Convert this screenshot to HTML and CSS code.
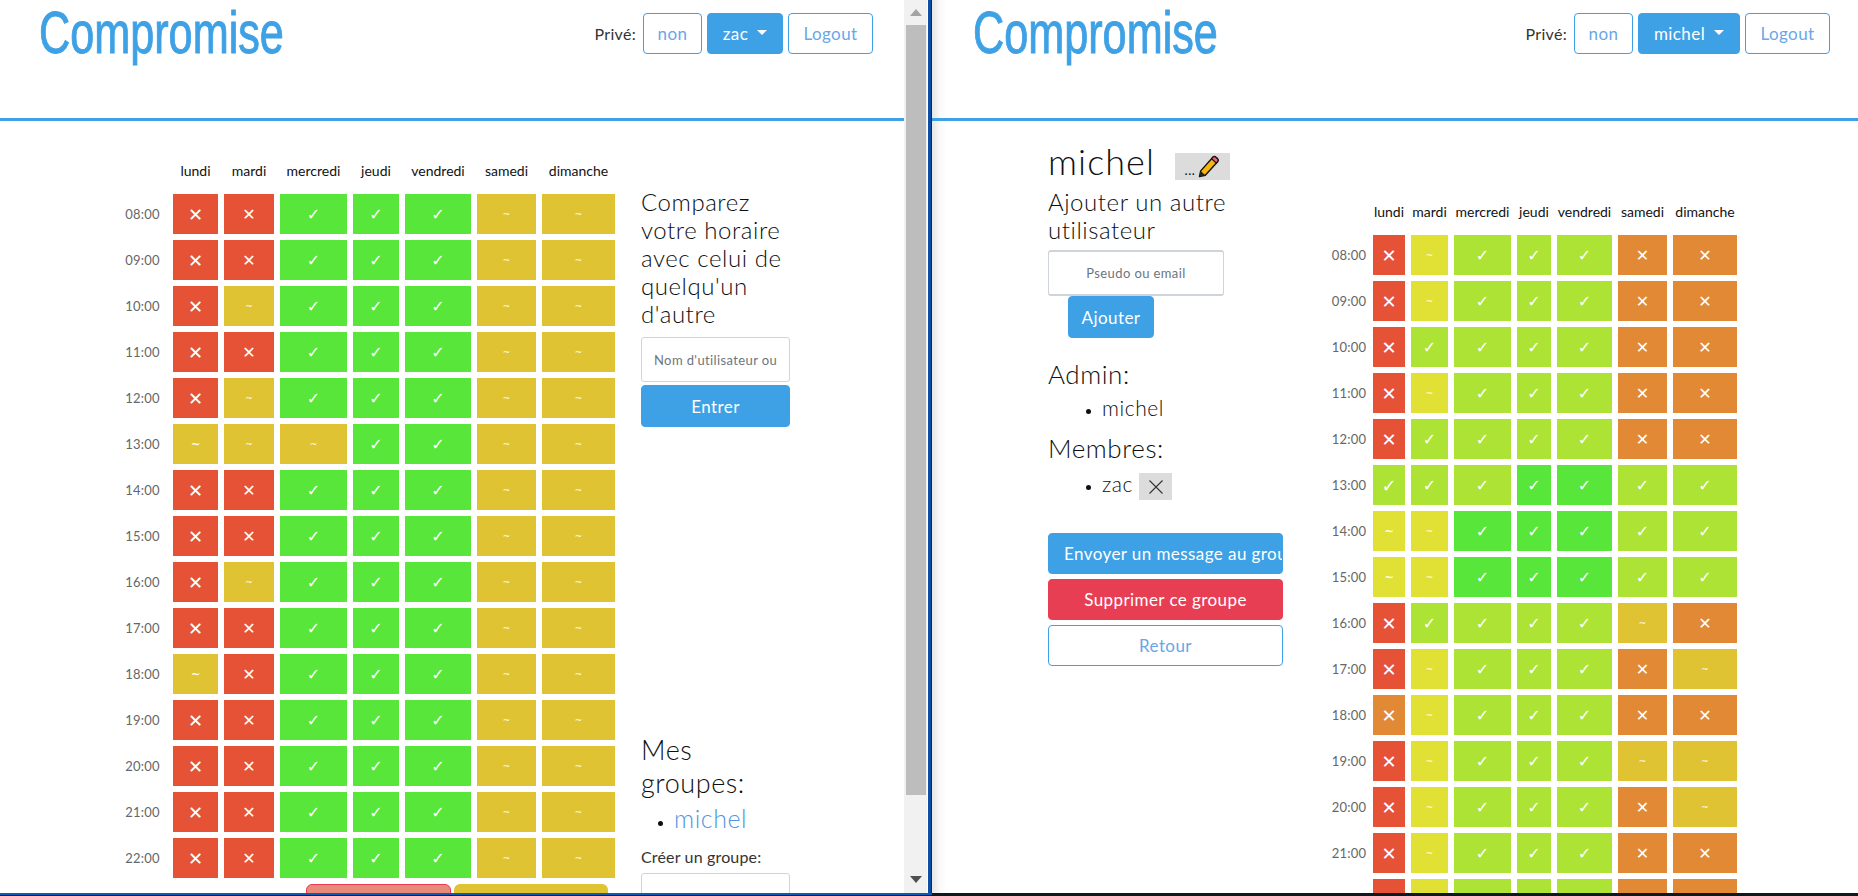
FILE: index.html
```html
<!DOCTYPE html>
<html lang="fr">
<head>
<meta charset="utf-8">
<title>Compromise</title>
<link rel="stylesheet" href="styles.css">
</head>
<body>
<div class="desktop">
  <div class="windows">
    <section class="pane pane-left">
      <div class="page">
        <header class="topbar">
          <h1 class="logo">Compromise</h1>
          <div class="controls">
            <span class="prive">Privé:</span>
            <a class="btn outline btn-non">non</a>
            <a class="btn primary btn-user btn-zac">zac<i class="caret"></i></a>
            <a class="btn outline btn-logout">Logout</a>
          </div>
        </header>
        <main class="main main-left">
          <div class="sched sched-left">
            <span></span><b>lundi</b><b>mardi</b><b>mercredi</b><b>jeudi</b><b>vendredi</b><b>samedi</b><b>dimanche</b>
            <em>08:00</em><i class="c red first">✕</i><i class="c red">✕</i><i class="c green">✓</i><i class="c green">✓</i><i class="c green">✓</i><i class="c gold t">~</i><i class="c gold t">~</i>
            <em>09:00</em><i class="c red first">✕</i><i class="c red">✕</i><i class="c green">✓</i><i class="c green">✓</i><i class="c green">✓</i><i class="c gold t">~</i><i class="c gold t">~</i>
            <em>10:00</em><i class="c red first">✕</i><i class="c gold t">~</i><i class="c green">✓</i><i class="c green">✓</i><i class="c green">✓</i><i class="c gold t">~</i><i class="c gold t">~</i>
            <em>11:00</em><i class="c red first">✕</i><i class="c red">✕</i><i class="c green">✓</i><i class="c green">✓</i><i class="c green">✓</i><i class="c gold t">~</i><i class="c gold t">~</i>
            <em>12:00</em><i class="c red first">✕</i><i class="c gold t">~</i><i class="c green">✓</i><i class="c green">✓</i><i class="c green">✓</i><i class="c gold t">~</i><i class="c gold t">~</i>
            <em>13:00</em><i class="c gold t first">~</i><i class="c gold t">~</i><i class="c gold t">~</i><i class="c green">✓</i><i class="c green">✓</i><i class="c gold t">~</i><i class="c gold t">~</i>
            <em>14:00</em><i class="c red first">✕</i><i class="c red">✕</i><i class="c green">✓</i><i class="c green">✓</i><i class="c green">✓</i><i class="c gold t">~</i><i class="c gold t">~</i>
            <em>15:00</em><i class="c red first">✕</i><i class="c red">✕</i><i class="c green">✓</i><i class="c green">✓</i><i class="c green">✓</i><i class="c gold t">~</i><i class="c gold t">~</i>
            <em>16:00</em><i class="c red first">✕</i><i class="c gold t">~</i><i class="c green">✓</i><i class="c green">✓</i><i class="c green">✓</i><i class="c gold t">~</i><i class="c gold t">~</i>
            <em>17:00</em><i class="c red first">✕</i><i class="c red">✕</i><i class="c green">✓</i><i class="c green">✓</i><i class="c green">✓</i><i class="c gold t">~</i><i class="c gold t">~</i>
            <em>18:00</em><i class="c gold t first">~</i><i class="c red">✕</i><i class="c green">✓</i><i class="c green">✓</i><i class="c green">✓</i><i class="c gold t">~</i><i class="c gold t">~</i>
            <em>19:00</em><i class="c red first">✕</i><i class="c red">✕</i><i class="c green">✓</i><i class="c green">✓</i><i class="c green">✓</i><i class="c gold t">~</i><i class="c gold t">~</i>
            <em>20:00</em><i class="c red first">✕</i><i class="c red">✕</i><i class="c green">✓</i><i class="c green">✓</i><i class="c green">✓</i><i class="c gold t">~</i><i class="c gold t">~</i>
            <em>21:00</em><i class="c red first">✕</i><i class="c red">✕</i><i class="c green">✓</i><i class="c green">✓</i><i class="c green">✓</i><i class="c gold t">~</i><i class="c gold t">~</i>
            <em>22:00</em><i class="c red first">✕</i><i class="c red">✕</i><i class="c green">✓</i><i class="c green">✓</i><i class="c green">✓</i><i class="c gold t">~</i><i class="c gold t">~</i>
          </div>
          <aside class="side">
            <h4 class="side-title">Comparez votre horaire avec celui de quelqu'un d'autre</h4>
            <input class="field field-compare" placeholder="Nom d'utilisateur ou email">
            <a class="btn primary btn-enter">Entrer</a>
            <h3 class="groups-title">Mes groupes:</h3>
            <ul class="groups"><li><a>michel</a></li></ul>
            <label class="create">Créer un groupe:</label>
            <input class="field field-create">
          </aside>
          <div class="actions">
            <a class="btn-clear"></a>
            <a class="btn-maybe"></a>
          </div>
        </main>
      </div>
      <div class="scrollbar">
        <span class="arrow up"></span>
        <span class="thumb"></span>
        <span class="arrow down"></span>
      </div>
    </section>
    <div class="divider"></div>
    <section class="pane pane-right">
      <div class="page">
        <header class="topbar topbar-right">
          <h1 class="logo">Compromise</h1>
          <div class="controls">
            <span class="prive">Privé:</span>
            <a class="btn outline btn-non">non</a>
            <a class="btn primary btn-user btn-michel">michel<i class="caret"></i></a>
            <a class="btn outline btn-logout">Logout</a>
          </div>
        </header>
        <main class="main main-right">
          <div class="group">
            <div class="group-head">
              <h2 class="group-name">michel</h2>
              <span class="edit">...<svg class="pencil" viewBox="0 0 24 24" width="24" height="24"><path d="M3.5 21.5l1.2-5.6L16.9 2.2c.9-.9 2.2-.8 3 0l1.7 1.6c.8.8.8 2 0 2.9L9.3 20.2z" fill="#f8b50d" stroke="#111" stroke-width="1.4" stroke-linejoin="round"/><path d="M16.9 2.2c.9-.9 2.2-.8 3 0l1.7 1.6c.8.8.8 2 0 2.9l-1.3 1.4-4.7-4.4z" fill="#ee5f73" stroke="#111" stroke-width="1.2"/><path d="M3.5 21.5l1.2-5.6 4.6 4.3z" fill="#222"/></svg></span>
            </div>
            <h4 class="add-title">Ajouter un autre utilisateur</h4>
            <input class="field field-add" placeholder="Pseudo ou email">
            <a class="btn primary btn-add">Ajouter</a>
            <h4 class="role role-admin">Admin:</h4>
            <ul class="people people-admin"><li>michel</li></ul>
            <h4 class="role role-members">Membres:</h4>
            <ul class="people"><li class="member">zac <span class="remove"><svg viewBox="0 0 16 16" width="16" height="16"><path d="M1.5 1.5l13 13M14.5 1.5l-13 13" stroke="#333" stroke-width="1.1" fill="none"/></svg></span></li></ul>
            <a class="btn primary wide wide-first"><span>Envoyer un message au groupe</span></a>
            <a class="btn danger wide">Supprimer ce groupe</a>
            <a class="btn outline wide">Retour</a>
          </div>
          <div class="sched sched-right">
            <span></span><b>lundi</b><b>mardi</b><b>mercredi</b><b>jeudi</b><b>vendredi</b><b>samedi</b><b>dimanche</b>
            <em>08:00</em><i class="c red first">✕</i><i class="c lemon t">~</i><i class="c lime">✓</i><i class="c lime">✓</i><i class="c lime">✓</i><i class="c orange">✕</i><i class="c orange">✕</i>
            <em>09:00</em><i class="c red first">✕</i><i class="c lemon t">~</i><i class="c lime">✓</i><i class="c lime">✓</i><i class="c lime">✓</i><i class="c orange">✕</i><i class="c orange">✕</i>
            <em>10:00</em><i class="c red first">✕</i><i class="c lime">✓</i><i class="c lime">✓</i><i class="c lime">✓</i><i class="c lime">✓</i><i class="c orange">✕</i><i class="c orange">✕</i>
            <em>11:00</em><i class="c red first">✕</i><i class="c lemon t">~</i><i class="c lime">✓</i><i class="c lime">✓</i><i class="c lime">✓</i><i class="c orange">✕</i><i class="c orange">✕</i>
            <em>12:00</em><i class="c red first">✕</i><i class="c lime">✓</i><i class="c lime">✓</i><i class="c lime">✓</i><i class="c lime">✓</i><i class="c orange">✕</i><i class="c orange">✕</i>
            <em>13:00</em><i class="c lime first">✓</i><i class="c lime">✓</i><i class="c lime">✓</i><i class="c green">✓</i><i class="c green">✓</i><i class="c lime">✓</i><i class="c lime">✓</i>
            <em>14:00</em><i class="c lemon t first">~</i><i class="c lemon t">~</i><i class="c green">✓</i><i class="c green">✓</i><i class="c green">✓</i><i class="c lime">✓</i><i class="c lime">✓</i>
            <em>15:00</em><i class="c lemon t first">~</i><i class="c lemon t">~</i><i class="c green">✓</i><i class="c green">✓</i><i class="c green">✓</i><i class="c lime">✓</i><i class="c lime">✓</i>
            <em>16:00</em><i class="c red first">✕</i><i class="c lime">✓</i><i class="c lime">✓</i><i class="c lime">✓</i><i class="c lime">✓</i><i class="c gold t">~</i><i class="c orange">✕</i>
            <em>17:00</em><i class="c red first">✕</i><i class="c lemon t">~</i><i class="c lime">✓</i><i class="c lime">✓</i><i class="c lime">✓</i><i class="c orange">✕</i><i class="c gold t">~</i>
            <em>18:00</em><i class="c orange first">✕</i><i class="c lemon t">~</i><i class="c lime">✓</i><i class="c lime">✓</i><i class="c lime">✓</i><i class="c orange">✕</i><i class="c orange">✕</i>
            <em>19:00</em><i class="c red first">✕</i><i class="c lemon t">~</i><i class="c lime">✓</i><i class="c lime">✓</i><i class="c lime">✓</i><i class="c gold t">~</i><i class="c gold t">~</i>
            <em>20:00</em><i class="c red first">✕</i><i class="c lemon t">~</i><i class="c lime">✓</i><i class="c lime">✓</i><i class="c lime">✓</i><i class="c orange">✕</i><i class="c gold t">~</i>
            <em>21:00</em><i class="c red first">✕</i><i class="c lemon t">~</i><i class="c lime">✓</i><i class="c lime">✓</i><i class="c lime">✓</i><i class="c orange">✕</i><i class="c orange">✕</i>
            <em>22:00</em><i class="c red first">✕</i><i class="c lemon t">~</i><i class="c lime">✓</i><i class="c lime">✓</i><i class="c lime">✓</i><i class="c orange">✕</i><i class="c orange">✕</i>
          </div>
        </main>
      </div>
    </section>
  </div>
  <div class="taskbar"></div>
</div>
</body>
</html>
```
FILE: styles.css
```css
* { box-sizing: border-box; }
html, body { margin: 0; height: 100%; overflow: hidden; background: #fff; }
body { font-family: "Lato", "Open Sans", sans-serif; color: #0d0f12; letter-spacing: .035em; font-weight: 300; }
h1, h2, h3, h4, ul { margin: 0; padding: 0; font-weight: 300; }

.desktop { display: flex; flex-direction: column; height: 896px; }
.windows { display: flex; height: 893px; overflow: hidden; }
.taskbar { height: 3px; background: linear-gradient(90deg, #0d5cb0 0 932px, #10181f 932px); border-bottom: 1px solid #10181f; }

.pane { display: flex; height: 893px; overflow: hidden; background: #fff; }
.pane-left { width: 928px; }
.pane-right { width: 926px; background: linear-gradient(90deg, #e6e6e6, #fafafa 8px, #fff 15px); }
.divider { width: 4px; background: linear-gradient(90deg, #0b4fa6 0 60%, #0a1a38); }
.page { flex: 1; min-width: 0; }

.topbar { display: flex; justify-content: space-between; height: 121px; padding: 0 31px 0 39px; border-bottom: 3px solid #3ea1e6; }
.topbar-right { padding: 0 28px 0 41px; }
.logo { width: 200px; font-family: "Liberation Sans", sans-serif; font-size: 60px; line-height: 66px; color: #3ea1e6; letter-spacing: 0; transform: scaleX(.72); transform-origin: 0 0; font-weight: 400; white-space: nowrap; -webkit-text-stroke: 1px #3ea1e6; }
.controls { display: flex; align-items: center; gap: 5px; height: 41px; margin-top: 13px; }
.prive { font-size: 16px; margin-right: 2px; color: #333; letter-spacing: .02em; font-weight: 400; }

.btn { display: flex; align-items: center; justify-content: center; height: 41px; border-radius: 4px; font-size: 17px; border: 1px solid #3ea1e6; white-space: nowrap; letter-spacing: .025em; font-weight: 400; }
.outline { background: #fff; color: #6aa6e8; }
.primary { background: #3ea1e6; color: #fff; }
.danger { background: #e83e54; border-color: #e83e54; color: #fff; }
.btn-non { width: 59px; }
.btn-logout { width: 85px; }
.btn-zac { width: 76px; }
.btn-michel { width: 102px; }
.caret { width: 0; height: 0; margin-left: 9px; margin-bottom: 3px; border: 5px solid transparent; border-top-color: #fff; border-bottom: 0; }

.main { display: flex; position: relative; }
.main-left { padding: 40px 0 0 118px; gap: 26px; }
.main-right { padding: 19px 0 0 116px; gap: 48px; }

.sched { display: grid; grid-auto-rows: 40px; row-gap: 6px; column-gap: 6px; align-self: flex-start; }
.sched-left { grid-template-columns: 49px 45px 50px 67px 46px 66px 59px 73px; grid-template-rows: 27px; }
.sched-right { grid-template-columns: 36px 32px 37px 57px 34px 55px 49px 64px; grid-template-rows: 27px; margin-top: 62px; }
.sched b { font-weight: 400; font-size: 14px; line-height: 20px; text-align: center; white-space: nowrap; color: #111; letter-spacing: 0; display: flex; justify-content: center; }
.sched em { font-style: normal; font-weight: 400; font-size: 13px; line-height: 40px; text-align: center; color: #666; letter-spacing: .02em; }
.c { font-family: "DejaVu Sans", sans-serif; font-style: normal; font-weight: 400; display: flex; align-items: center; justify-content: center; color: #fff; font-size: 16px; letter-spacing: 0; }
.c.t { font-size: 9px; }
.first { font-size: 18px; font-weight: 700; }
.c.t.first { font-size: 11px; }
.red { background: #e55235; }
.green { background: #57e639; }
.gold { background: #e0c332; }
.lime { background: #ade335; }
.lemon { background: #e1e135; }
.orange { background: #e28936; }

.side { width: 149px; padding-top: 27px; flex: none; }
.side-title { font-size: 24px; line-height: 28px; margin-bottom: 9px; }
.field { display: block; width: 100%; height: 45px; padding: 0 12px; border: 1px solid #ced4da; border-radius: 3px; background: #fff; font-family: inherit; font-size: 13px; letter-spacing: .03em; font-weight: 400; }
.field::placeholder { color: #6c757d; opacity: 1; }
.btn-enter { height: 42px; margin-top: 3px; }
.groups-title { font-size: 27px; line-height: 33px; margin-top: 306px; }
.groups { margin: 3px 0 0; padding-left: 33px; font-size: 25px; line-height: 32px; }
.groups li::marker { font-size: 14px; }
.groups a { color: #4f96e4; }
.create { display: block; font-size: 16px; line-height: 20px; margin-top: 13px; letter-spacing: .01em; font-weight: 400; color: #333; }
.field-create { margin-top: 6px; height: 60px; }

.actions { position: absolute; left: 306px; top: 763px; display: flex; gap: 3px; }
.btn-clear, .btn-maybe { display: block; height: 30px; border-radius: 6px 6px 0 0; }
.btn-clear { width: 145px; background: #e88b7a; border: 1px solid #e83e54; }
.btn-maybe { width: 154px; background: #e0c332; }

.scrollbar { width: 24px; flex: none; display: flex; flex-direction: column; align-items: center; background: #f1f1f1; padding: 9px 1px 0 2px; border-right: 1px solid #fff; }
.arrow { width: 0; height: 0; border-left: 6px solid transparent; border-right: 6px solid transparent; }
.arrow.up { border-bottom: 7px solid #a3a3a3; }
.thumb { display: block; width: 100%; height: 770px; margin-top: 9px; background: #bdbdbd; }
.arrow.down { border-top: 7px solid #505050; margin-top: 81px; }

.group { width: 235px; flex: none; }
.group-head { display: flex; align-items: flex-end; height: 43px; }
.group-name { font-size: 36px; line-height: 43px; letter-spacing: .03em; }
.edit { display: flex; align-items: flex-end; justify-content: center; width: 55px; height: 27px; margin-left: 20px; margin-bottom: 3px; background: #dcdcdc; font-size: 13px; line-height: 20px; font-weight: 400; }
.pencil { margin-left: 1px; margin-bottom: 1px; }
.add-title { font-size: 24px; line-height: 28px; margin-top: 5px; }
.field-add { width: 176px; height: 46px; margin-top: 6px; border-width: 2px 1px; text-align: center; }
.btn-add { width: 86px; height: 42px; margin-left: 20px; }
.role { font-size: 26px; line-height: 29px; }
.role-admin { margin-top: 22px; }
.role-members { margin-top: 12px; }
.people { margin: 7px 0 0; padding-left: 54px; font-size: 21px; line-height: 28px; }
.people-admin { margin-top: 5px; }
.people li::marker { font-size: 14px; }
.remove { display: inline-flex; align-items: center; justify-content: center; width: 33px; height: 27px; background: #dcdcdc; vertical-align: middle; }
.wide { width: 235px; height: 41px; margin-bottom: 5px; overflow: hidden; }
.wide-first { margin-top: 33px; justify-content: flex-start; padding-left: 15px; }
```
